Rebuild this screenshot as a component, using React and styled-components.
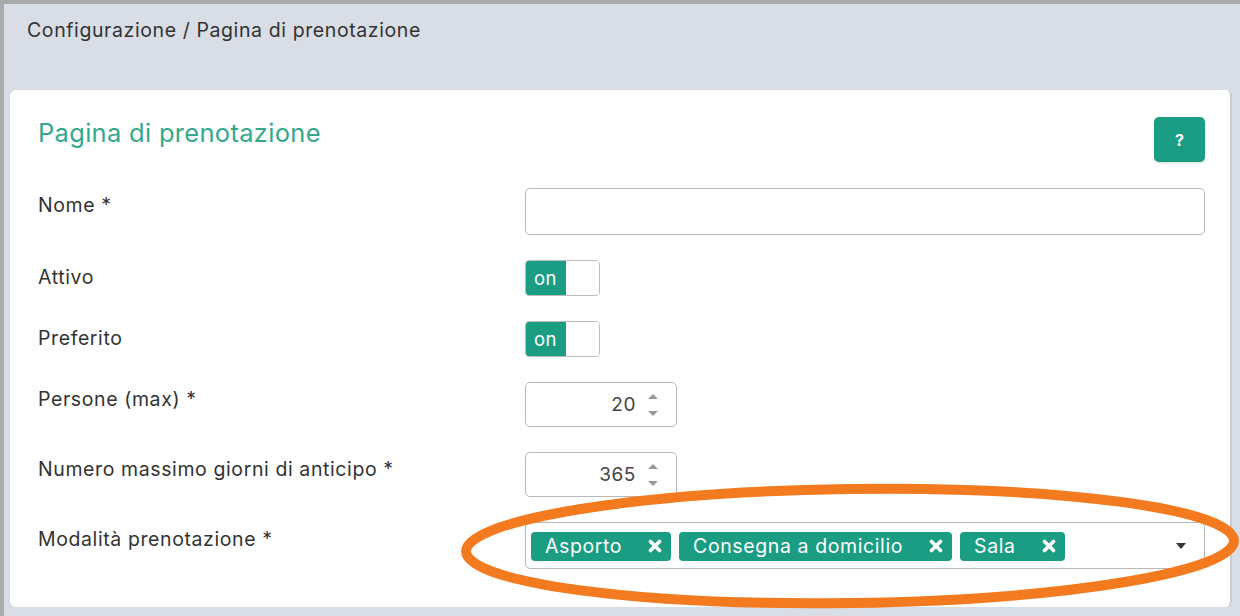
import styled, { createGlobalStyle } from 'styled-components';

const teal = '#1a9d83';

const GlobalStyle = createGlobalStyle`
  html, body {
    margin: 0;
    padding: 0;
    background: #d8dde6;
  }
  * {
    box-sizing: border-box;
  }
  body {
    font-family: Inter, 'Liberation Sans', Arial, sans-serif;
    color: #333;
    letter-spacing: 0.6px;
  }
`;

function Chevrons() {
  return (
    <svg width="14" height="30" viewBox="0 0 14 30">
      <path d="M2 9 L7 4 L12 9 Z" fill="#9a9a9a" />
      <path d="M2 21 L7 26 L12 21 Z" fill="#9a9a9a" />
    </svg>
  );
}

function Caret() {
  return (
    <svg width="10" height="6" viewBox="0 0 10 6">
      <path d="M0 0 L10 0 L5 6 Z" fill="#333" />
    </svg>
  );
}

function Times() {
  return (
    <svg width="14" height="14" viewBox="0 0 14 14">
      <path
        d="M2.5 2.5 L11.5 11.5 M11.5 2.5 L2.5 11.5"
        stroke="#fff"
        strokeWidth="3.6"
        strokeLinecap="round"
      />
    </svg>
  );
}

function Toggle({ label }) {
  return (
    <ToggleBox>
      <ToggleOn>{label}</ToggleOn>
      <ToggleOff />
    </ToggleBox>
  );
}

function NumberField({ value }) {
  return (
    <NumberBox>
      <NumberValue>{value}</NumberValue>
      <Chevrons />
    </NumberBox>
  );
}

export default function App() {
  const modes = ['Asporto', 'Consegna a domicilio', 'Sala'];

  return (
    <Screen>
      <GlobalStyle />
      <Page>
        <Breadcrumb>Configurazione / Pagina di prenotazione</Breadcrumb>
        <Card>
          <CardHeader>
            <Title>Pagina di prenotazione</Title>
            <HelpButton>?</HelpButton>
          </CardHeader>

          <FormRow>
            <Label>Nome *</Label>
            <TextInput />
          </FormRow>

          <FormRow>
            <Label>Attivo</Label>
            <Toggle label="on" />
          </FormRow>

          <FormRow>
            <Label>Preferito</Label>
            <Toggle label="on" />
          </FormRow>

          <FormRow>
            <Label>Persone (max) *</Label>
            <NumberField value="20" />
          </FormRow>

          <FormRow>
            <Label>Numero massimo giorni di anticipo *</Label>
            <NumberField value="365" />
          </FormRow>

          <FormRow $last>
            <Label>Modalità prenotazione *</Label>
            <SelectBox>
              <Chips>
                {modes.map(m => (
                  <Chip key={m}>
                    {m}
                    <Times />
                  </Chip>
                ))}
              </Chips>
              <Caret />
            </SelectBox>
          </FormRow>
        </Card>
      </Page>

      <Annotation width="1240" height="616" viewBox="0 0 1240 616">
        <ellipse
          cx="850"
          cy="546"
          rx="384"
          ry="57"
          transform="rotate(-0.8 850 546)"
          fill="none"
          stroke="#f37a1f"
          strokeWidth="10"
        />
      </Annotation>
    </Screen>
  );
}

const Screen = styled.div`
  position: relative;
  width: 1240px;
  height: 616px;
  overflow: hidden;
`;

const Page = styled.div`
  height: 616px;
  background: #d8dde6;
  border-top: 4px solid #a9a9a9;
  border-left: 4px solid #ababab;
  padding: 0 8px 0 6px;
  display: flex;
  flex-direction: column;
`;

const Breadcrumb = styled.div`
  height: 86px;
  padding: 14px 0 0 17px;
  font-size: 19.5px;
  line-height: 24px;
  color: #333;
`;

const Card = styled.div`
  background: #fff;
  border-radius: 6px;
  padding: 27px 25px 38px 28px;
  border-right: 2px solid #c9ccd2;
`;

const CardHeader = styled.div`
  display: flex;
  justify-content: space-between;
  align-items: flex-start;
  margin-bottom: 26px;
`;

const Title = styled.h2`
  margin: 0;
  font-size: 25.5px;
  line-height: 32px;
  font-weight: 400;
  letter-spacing: 0.3px;
  color: #33a88d;
`;

const HelpButton = styled.button`
  width: 51px;
  height: 45px;
  border: none;
  border-radius: 5px;
  background: ${teal};
  color: #fff;
  font-family: inherit;
  font-weight: 700;
  font-size: 16px;
  box-shadow: 0 1px 2px rgba(0, 0, 0, 0.15);
`;

const FormRow = styled.div`
  display: grid;
  grid-template-columns: 487px 1fr;
  align-items: start;
  margin-bottom: ${p => (p.$last ? '0' : '25px')};
`;

const Label = styled.label`
  padding-top: 5px;
  font-size: 19.5px;
  line-height: 24px;
  color: #333;
`;

const TextInput = styled.input`
  height: 47px;
  width: 100%;
  border: 1px solid #b8b8b8;
  border-radius: 5px;
  background: #fff;
  outline: none;
`;

const ToggleBox = styled.div`
  display: flex;
  width: 75px;
  height: 36px;
  border: 1px solid #bdbdbd;
  border-radius: 4px;
  overflow: hidden;
`;

const ToggleOn = styled.div`
  width: 40px;
  background: ${teal};
  color: #fff;
  font-size: 18.5px;
  line-height: 34px;
  padding-left: 8px;
  letter-spacing: 0.3px;
`;

const ToggleOff = styled.div`
  flex: 1;
  background: #fff;
`;

const NumberBox = styled.div`
  display: flex;
  align-items: center;
  justify-content: flex-end;
  gap: 10px;
  width: 152px;
  height: 45px;
  padding-right: 16px;
  border: 1px solid #b8b8b8;
  border-radius: 5px;
  background: #fff;
`;

const NumberValue = styled.span`
  font-size: 19px;
  color: #444;
`;

const SelectBox = styled.div`
  display: flex;
  align-items: center;
  justify-content: space-between;
  height: 47px;
  padding: 0 18px 0 5px;
  border: 1px solid #b8b8b8;
  border-radius: 5px;
  background: #fff;
`;

const Chips = styled.div`
  display: flex;
  gap: 8px;
  padding-top: 1px;
`;

const Chip = styled.span`
  display: flex;
  align-items: center;
  gap: 26px;
  height: 29px;
  padding: 0 9px 0 14px;
  border-radius: 4px;
  background: ${teal};
  color: #fff;
  font-size: 19.5px;
`;

const Annotation = styled.svg`
  position: absolute;
  top: 0;
  left: 0;
  pointer-events: none;
`;
